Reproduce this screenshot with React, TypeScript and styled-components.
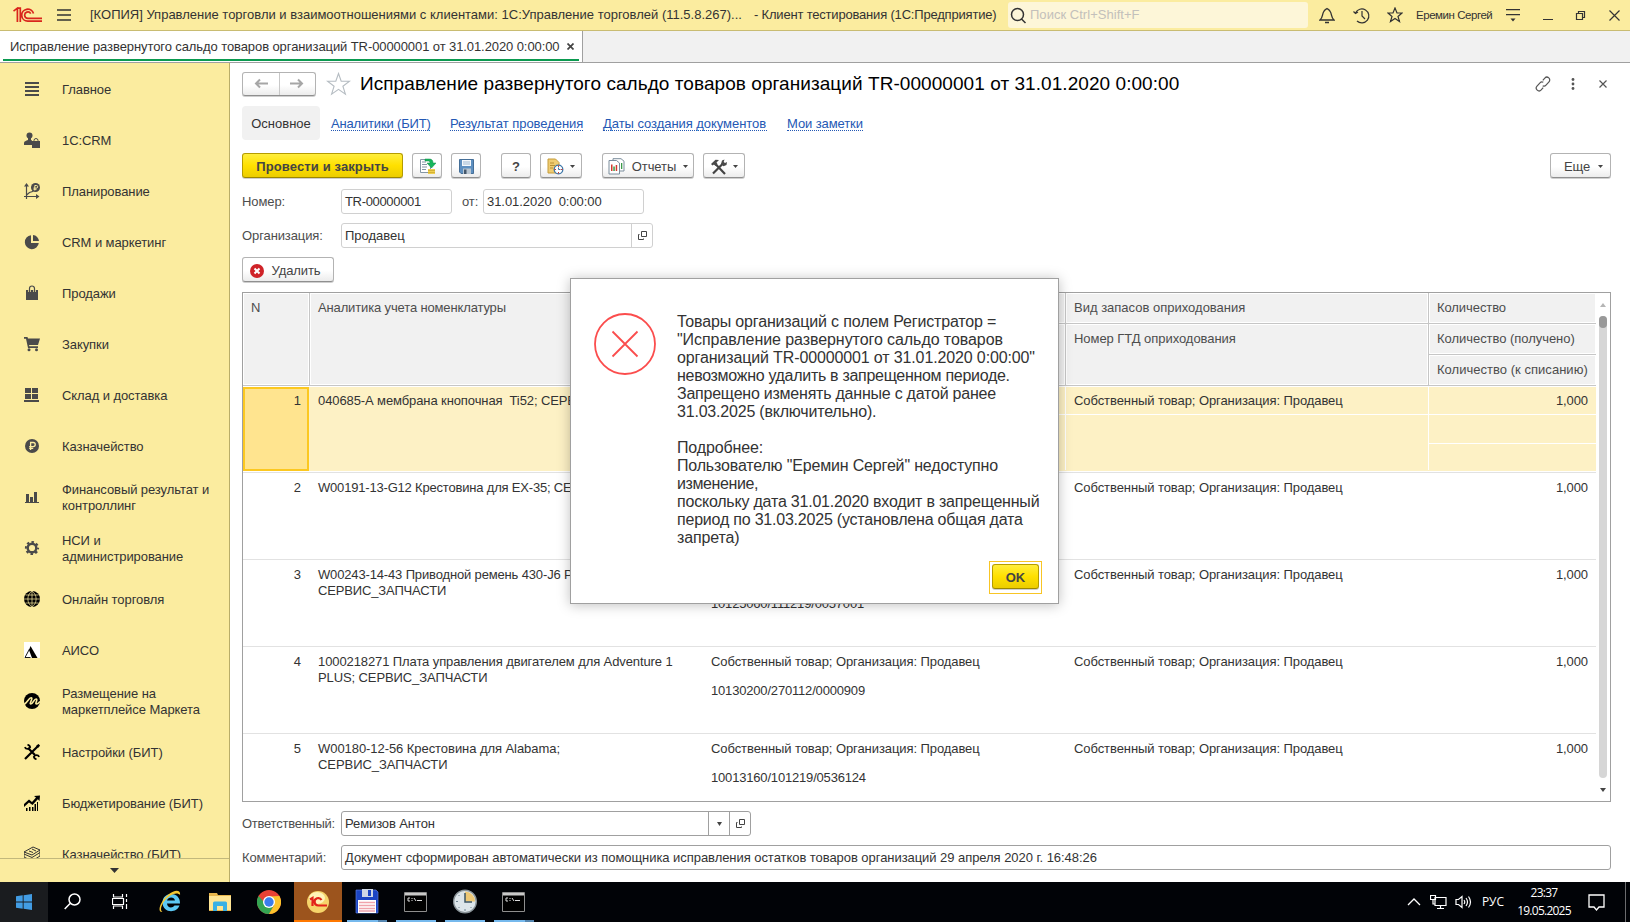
import React from 'react';
import styled, { createGlobalStyle, css } from 'styled-components';

const Global = createGlobalStyle`
  * { box-sizing: border-box; }
  body { margin: 0; background: #fff; font-family: "Liberation Sans", Arial, sans-serif; font-size: 13px; line-height: 16px; color: #333; overflow: hidden; }
  svg { display: block; flex: none; }
`;

const Screen = styled.div`
  width: 1630px; height: 922px; display: flex; flex-direction: column; overflow: hidden; white-space: nowrap;
`;

/* ---------- window title ---------- */
const TitleBar = styled.header`
  height: 31px; flex: none; display: flex; align-items: center; background: #fbec9f; border-bottom: 1px solid #c9bc72; padding-left: 13px;
`;
const WindowTitle = styled.div<{ $width: number; $ls: number }>`
  width: ${p => p.$width}px; flex: none; color: #333; letter-spacing: ${p => p.$ls}px;
`;
const Search = styled.div`
  width: 300px; flex: none; height: 26px; border-radius: 3px; background: #fdf6d8; display: flex; align-items: center; gap: 3px; padding-left: 2px; color: #c3c0bb; margin-right: 2px; letter-spacing: 0.03px;
`;
const TitleIcon = styled.div<{ $w?: number }>`
  width: ${p => p.$w ?? 34}px; flex: none; display: flex; justify-content: center;
`;
const UserName = styled.div`
  width: 77px; flex: none; font-size: 11.5px; margin-left: 4px; letter-spacing: -0.45px;
`;

/* ---------- open tabs ---------- */
const TabStrip = styled.div`
  height: 32px; flex: none; display: flex; background: #f1f1f1; border-bottom: 1px solid #a0a0a0;
`;
const OpenTab = styled.div`
  width: 583px; padding: 0 3px; background: #fff; border-right: 1px solid #a0a0a0;
`;
const OpenTabInner = styled.div`
  height: 30px; border-bottom: 2px solid #0b9a50; padding: 3px 5px 0 7px; display: flex; align-items: center; justify-content: space-between;
  span { letter-spacing: -0.09px; }
`;

/* ---------- navigation ---------- */
const Body = styled.div`
  flex: 1; display: flex; min-height: 0;
`;
const Sidebar = styled.nav`
  width: 230px; flex: none; background: #fbec9f; border-right: 1px solid #b9ad69; display: flex; flex-direction: column;
`;
const SectionList = styled.div`
  height: 795px; padding-top: 1px; overflow: hidden;
`;
const Section = styled.div`
  height: 51px; display: flex; align-items: center; padding: 0 0 1px 24px; gap: 22px; white-space: pre; color: #333; letter-spacing: -0.08px;
  span { padding-top: 2px; }
`;
const SidebarMore = styled.div`
  flex: 1; border-top: 1px solid #c2b87c; display: flex; align-items: center; justify-content: center;
`;

/* ---------- document form ---------- */
const Form = styled.main`
  flex: 1; min-width: 0; padding: 8px 19px 0 12px; display: flex; flex-direction: column;
`;
const FormHeader = styled.div`
  height: 25px; display: flex; align-items: center; margin: 0 -7px 10px 0;
`;
const raised = css`
  border: 1px solid #b3b3b3; border-bottom-color: #8f8f8f; border-radius: 3px; background: linear-gradient(#fff 55%, #ececec); box-shadow: 0 1px 0 #cfcfcf;
`;
const NavButtons = styled.div`
  ${raised} width: 74px; height: 24px; display: flex; margin-right: 10px;
  > div { flex: 1; display: flex; align-items: center; justify-content: center; }
  > div + div { border-left: 1px solid #c8c8c8; }
`;
const FormTitle = styled.h1`
  margin: 0 0 0 9px; flex: 1; font-size: 19px; font-weight: 400; line-height: 24px; color: #000; letter-spacing: 0.06px;
`;
const FormTabs = styled.div`
  height: 34px; display: flex; align-items: center; margin-bottom: 13px; gap: 20px;
`;
const CurrentTab = styled.div`
  width: 78px; height: 34px; line-height: 36px; border-radius: 4px; background: #f1f1f1; text-align: center; margin-right: -9px;
`;
const TabLink = styled.a<{ $width: number; $ls?: number }>`
  width: ${p => p.$width}px; color: #2458b4; line-height: 15px; border-bottom: 1px dotted #2458b4; height: 15px; letter-spacing: ${p => p.$ls ?? -0.05}px;
`;
const Toolbar = styled.div<{ $after: number }>`
  height: 26px; display: flex; align-items: flex-start; margin-bottom: ${p => p.$after}px;
`;
const Button = styled.div<{ $width: number; $left?: number; $gap?: number; $shift?: number }>`
  ${raised} width: ${p => p.$width}px; height: 25px; margin-left: ${p => p.$left ?? 0}px; color: #444; letter-spacing: -0.1px;
  display: flex; align-items: center; justify-content: center; gap: ${p => p.$gap ?? 6}px;
  padding: 2px ${p => Math.max(0, -(p.$shift ?? 0))}px 0 ${p => Math.max(0, p.$shift ?? 0)}px;
`;
const PrimaryButton = styled(Button)`
  border-color: #b59c00; border-bottom-color: #9c8700; background: linear-gradient(#ffee3c, #ffe000 50%, #eccd00); font-weight: 700; color: #444; letter-spacing: 0.12px;
`;
const Spring = styled.div`
  flex: 1;
`;
const Field = styled.div<{ $after: number }>`
  height: 25px; display: flex; align-items: center; margin-bottom: ${p => p.$after}px; color: #4d4d4d;
`;
const Label = styled.div<{ $width?: number; $indent?: number; $ls?: number }>`
  width: ${p => p.$width ?? 99}px; flex: none; padding-left: ${p => p.$indent ?? 0}px; letter-spacing: ${p => p.$ls ?? -0.1}px;
`;
const Input = styled.div<{ $width: number; $strong?: boolean; $ls?: number }>`
  width: ${p => p.$width}px; height: 25px; border: 1px solid ${p => (p.$strong ? '#a0a0a0' : '#d0d0d0')}; border-radius: 3px; display: flex; color: #333; line-height: 23px; white-space: pre;
  letter-spacing: ${p => p.$ls ?? 0}px;
  > span { flex: 1; padding-left: 3px; }
  > div { width: 21px; border-left: 1px solid ${p => (p.$strong ? '#a0a0a0' : '#d0d0d0')}; display: flex; align-items: center; justify-content: center; }
`;

/* ---------- table ---------- */
const Table = styled.div`
  height: 510px; flex: none; border: 1px solid #a0a0a0; margin-bottom: 9px; display: flex; overflow: hidden;
`;
const TableContent = styled.div`
  width: 1353px;
`;
const columns = '67px 393px 363px 363px 167px';
const TableHead = styled.div`
  display: grid; grid-template-columns: ${columns}; height: 93px; color: #4d4d4d;
`;
const Column = styled.div`
  display: flex; flex-direction: column;
`;
const HeadCell = styled.div<{ $span?: number; $last?: boolean; $ls?: number }>`
  height: ${p => (p.$span ?? 1) * 31}px; padding: 7px 8px; background: #f1f1f1; box-shadow: inset 0 0 0 1px #fff; letter-spacing: ${p => p.$ls ?? 0}px;
  border-bottom: 1px solid #c6c6c6; border-right: ${p => (p.$last ? 0 : 1)}px solid #c6c6c6;
`;
const Row = styled.div<{ $selected?: boolean }>`
  display: grid; grid-template-columns: ${columns}; height: 87px; border-bottom: 1px solid #e2e2e2;
  background: ${p => (p.$selected ? '#fdf1c5' : '#fff')}; box-shadow: ${p => (p.$selected ? 'inset 0 1px #fff, inset 0 -1px #fff' : 'none')};
`;
const Cell = styled.div<{ $span?: number; $line?: boolean; $right?: boolean; $end?: boolean; $ls?: number }>`
  height: ${p => (p.$span ?? 1) * 29}px; padding: 7px 8px 0; white-space: pre; overflow: hidden; color: #333;
  text-align: ${p => (p.$right ? 'right' : 'left')}; letter-spacing: ${p => p.$ls ?? -0.08}px;
  border-right: ${p => (p.$end ? 0 : 1)}px solid #fff; border-bottom: ${p => (p.$line ? 1 : 0)}px solid #fff;
`;
const NumberCell = styled.div<{ $selected?: boolean }>`
  margin: 1px 1px 1px 0; padding: ${p => (p.$selected ? '4px 6px' : '6px 8px')}; text-align: right;
  ${p => p.$selected && css`background: #ffe48f; border: 2px solid #fcc820;`}
`;
const ScrollBar = styled.div`
  width: 14px; display: flex; flex-direction: column; align-items: center; padding: 10px 0 9px;
`;
const Track = styled.div`
  width: 8px; flex: 1; margin: 9px 0 10px; background: #d6d6d6; border-radius: 4px;
`;
const Thumb = styled.div`
  height: 12px; border-radius: 4px; background: #999;
`;

/* ---------- message box ---------- */
const Dialog = styled.div`
  position: absolute; left: 570px; top: 278px; width: 489px; height: 326px; background: #fff; border: 1px solid #a0a0a0; box-shadow: 0 1px 12px rgba(0,0,0,.25);
  display: grid; grid-template-columns: 62px 1fr; column-gap: 21px; grid-template-rows: 250px auto; padding: 34px 16px 0 23px;
`;
const Message = styled.div`
  font-size: 16px; line-height: 18px; white-space: pre; color: #333;
`;
const MessageLine = styled.div<{ $ls: number }>`
  height: 18px; letter-spacing: ${p => p.$ls}px;
`;
const FocusFrame = styled.div`
  grid-column: 2; justify-self: end; width: 53px; height: 33px; border: 1px solid #f8c525; padding: 2px; margin-top: -2px;
`;

/* ---------- system task bar ---------- */
const TaskBar = styled.footer`
  height: 40px; flex: none; background: #010307; display: flex; color: #fff; font-family: "Open Sans", "Noto Sans", sans-serif; font-size: 12px;
`;
const Task = styled.div<{ $width?: number; $bg?: string; $line?: string; $tail?: boolean }>`
  width: ${p => p.$width ?? 49}px; height: 40px; display: flex; align-items: center; justify-content: center; padding-bottom: 1px;
  background: ${p => p.$bg ?? 'transparent'};
  ${p => p.$line && css`background-image: linear-gradient(90deg, ${p.$line} ${p.$tail ? '78%' : '100%'}, #5586b0 0); background-size: ${p.$bg ? '100%' : '40px'} 2px; background-position: center bottom; background-repeat: no-repeat;`}
`;
const Tray = styled.div`
  margin-left: auto; display: flex; align-items: center; height: 40px;
`;
const Language = styled.div`
  width: 24px; margin: 0 10px 0 10px; letter-spacing: -0.1px;
`;
const Clock = styled.div`
  width: 56px; text-align: center; line-height: 18px; letter-spacing: -0.75px; margin-right: 16px;
`;
const DesktopEdge = styled.div`
  width: 5px; height: 40px; border-left: 1px solid #6b6c6e; margin-left: 20px;
`;

/* ---------- icons ---------- */
const Svg = ({ w = 16, h = w, children, color = '#4a4a4a' }: { w?: number; h?: number; children: React.ReactNode; color?: string }) => (
  <svg width={w} height={h} viewBox={`0 0 ${w} ${h}`} fill={color} stroke="none">{children}</svg>
);
const Stroke = ({ w = 16, h = w, d, color = '#333', sw = 1.2 }: { w?: number; h?: number; d: string; color?: string; sw?: number }) => (
  <svg width={w} height={h} viewBox={`0 0 ${w} ${h}`} fill="none" stroke={color} strokeWidth={sw}><path d={d} /></svg>
);
const Caret = ({ color = '#444', w = 6, h = 3, up = false }) => (
  <Svg w={w} h={h} color={color}><path d={up ? `M0 ${h}h${w}L${w / 2} 0z` : `M0 0h${w}L${w / 2} ${h}z`} /></Svg>
);
const Logo = () => (
  <svg width="30" height="16" viewBox="0 0 30 16" fill="none" stroke="#d9241c" strokeWidth="1.7">
    <path d="M.5 4.2 4.4 1.2V15M4.2 1.2h3.1V15M20.5 6.5A6 6 0 1 0 14.8 14.2H29M17.7 6.7A3.2 3.2 0 1 0 14.8 11.4H29" />
  </svg>
);
const OpenIcon = () => <Stroke w={11} d="M4.5 1.5h5v5h-5zM2.5 4.500H1.5v5h5V8.5" color="#444" sw={1} />;
const Ruble = ({ color }: { color: string }) => <path d="M6.6 12V4.5h2.6a2 2 0 0 1 0 4.1H5.2M5.2 10.3h4" fill="none" stroke={color} strokeWidth="1.3" />;

const icons = {
  main: <Svg><path d="M1 1h14v2H1zM1 5h14v2H1zM1 9h14v2H1zM1 13h14v2H1z" /></Svg>,
  crm: <Svg><circle cx="5.5" cy="3.5" r="3" /><path d="M4 6h3v2l1 .5V13H0v-2c0-2 2-2 4-3zM8 9h8v7H8z" /><path d="M10 10V8.5a2 2 0 0 1 4 0V10" fill="none" stroke="#4a4a4a" /></Svg>,
  plan: <Svg><path d="M2.5 16V2M0 13.5h14" stroke="#4a4a4a" strokeWidth="1.2" /><path d="M0 3.5 2.5 0 5 3.5zM12 11l3.5 2.5L12 16z" /><path d="m2.5 12 3-2.5 3-1 1.5-1.5" fill="none" stroke="#4a4a4a" strokeWidth="1.2" /><circle cx="11.5" cy="4.5" r="4.5" /><path d="M10.8 7.5V2.5h1.6a1.2 1.2 0 0 1 0 2.6H9.5M9.5 6.3h3" fill="none" stroke="#fbec9f" /></Svg>,
  pie: <Svg><path d="M7 1.2V9h7.8A7 7 0 1 1 7 1.2z" /><path d="M9 1a6.5 6.5 0 0 1 6 6H9z" /></Svg>,
  bag: <Svg><path d="M2 5h12v10H2z" /><path d="M5.5 7V3.5a2.5 2.5 0 0 1 5 0V7" fill="none" stroke="#fbec9f" strokeWidth="2.6" /><path d="M5.5 7V3.5a2.5 2.5 0 0 1 5 0V7" fill="none" stroke="#4a4a4a" strokeWidth="1.2" /></Svg>,
  cart: <Svg><path d="M0 1h3.5l.5 1.5h12L14 9H5l.4 1.3H14V12H4L2 2.7H0z" /><circle cx="5" cy="13.7" r="1.5" /><circle cx="12.5" cy="13.7" r="1.5" /></Svg>,
  store: <Svg><path d="M1 1h6v5H1zM8 1h6v5H8zM1 7h6v5H1zM8 7h6v5H8zM0 13h15v2H0z" /></Svg>,
  cash: <Svg><circle cx="8" cy="8" r="7" /><Ruble color="#fbec9f" /></Svg>,
  bars: <Svg><path d="M1 13h14v1H1zM2 5h3v8H2zM6 8h3v5H6zM10 3h3v10h-3z" /></Svg>,
  gear: <Svg><circle cx="8" cy="8" r="4.3" fill="none" stroke="#4a4a4a" strokeWidth="2.4" /><circle cx="8" cy="8" r="6.1" fill="none" stroke="#4a4a4a" strokeWidth="2" strokeDasharray="2.5 2.29" strokeDashoffset="1.25" /></Svg>,
  globe: <Svg color="#000"><circle cx="8" cy="8" r="8" /><path d="M8 0v16M0 8h16M1.5 4h13M1.5 12h13M8 0C2.5 4 2.5 12 8 16M8 0c5.5 4 5.5 12 0 16" fill="none" stroke="#fbec9f" strokeWidth=".7" /></Svg>,
  aiso: <Svg color="#000"><path d="M0 0h16v16H0z" fill="#fff" /><path d="M6.5 4 13.500 16H8L5 8z" /><path d="M5.5 7 1 15.500h5.500" fill="none" stroke="#000" strokeWidth=".9" /></Svg>,
  market: <Svg color="#000"><circle cx="8" cy="8" r="8" /><path d="M0 11.500C3.500 9.500 5 4.500 7.200 4.800S4.800 11 6.800 11s3.400-5.500 5.400-5S10.500 11 12.500 11s2.500-1.500 3.500-2.500" fill="none" stroke="#fbec9f" strokeWidth="1.600" /></Svg>,
  tools: <Svg color="#000"><path d="M4 4l7 7M14.800 1.200 1 15" stroke="#000" strokeWidth="2.200" /><path d="M14.500 0 16 1.500 14 4l-2-2z" /><path d="M.8 3.200a3 3 0 0 0 5.400 0A3 3 0 0 0 3.500.8M15.200 12.800a3 3 0 0 0-5.400 0 3 3 0 0 0 2.700 2.400" fill="none" stroke="#000" strokeWidth="1.800" /></Svg>,
  growth: <Svg color="#000"><path d="M0 12V9l5-4.500 3 2.500 4-4.500-2-1.500L16 .5 15.500 6l-1.700-1.700L8.500 10 5 7.500z" /><path d="M2 16v-3h1.500v3zM5 16v-4h1.500v4zM8 16v-4h1.500v4zM10.500 16V9H12v7zM13 16V7h1v9z" /></Svg>,
  money: <svg width="16" height="16" viewBox="0 0 16 16" fill="none" stroke="#333"><path d="M0 6 9 1l7 3-8 5zM0 6v5l8 4 8-5V4M0 8l8 3.500 8-5M5 5l4 1.500M8 3l4 2" /></svg>,
};

const sections: [keyof typeof icons, string][] = [
  ['main', 'Главное'], ['crm', '1С:CRM'], ['plan', 'Планирование'], ['pie', 'CRM и маркетинг'], ['bag', 'Продажи'],
  ['cart', 'Закупки'], ['store', 'Склад и доставка'], ['cash', 'Казначейство'], ['bars', 'Финансовый результат и\nконтроллинг'],
  ['gear', 'НСИ и\nадминистрирование'], ['globe', 'Онлайн торговля'], ['aiso', 'АИСО'], ['market', 'Размещение на\nмаркетплейсе Маркета'],
  ['tools', 'Настройки (БИТ)'], ['growth', 'Бюджетирование (БИТ)'], ['money', 'Казначейство (БИТ)'],
];

const stock = 'Собственный товар; Организация: Продавец';
const rows = [
  { item: '040685-А мембрана кнопочная  Ti52; СЕРВИС', kind: '', gtd: '', ls: -0.1 },
  { item: 'W00191-13-G12 Крестовина для EX-35; СЕРВИС', kind: '', gtd: '', ls: -0.19 },
  { item: 'W00243-14-43 Приводной ремень 430-J6 PJ\nСЕРВИС_ЗАПЧАСТИ', kind: '', gtd: '10125060/111219/0057001', ls: -0.15 },
  { item: '1000218271 Плата управления двигателем для Adventure 1\nPLUS; СЕРВИС_ЗАПЧАСТИ', kind: stock, gtd: '10130200/270112/0000909', ls: -0.1 },
  { item: 'W00180-12-56 Крестовина для Alabama;\nСЕРВИС_ЗАПЧАСТИ', kind: stock, gtd: '10013160/101219/0536124', ls: -0.06 },
];

const message: [string, number][] = [
  ['Товары организаций с полем Регистратор =', -0.16],
  ['"Исправление развернутого сальдо товаров', -0.07],
  ['организаций TR-00000001 от 31.01.2020 0:00:00"', -0.13],
  ['невозможно удалить в запрещенном периоде.', -0.3],
  ['Запрещено изменять данные с датой ранее', -0.23],
  ['31.03.2025 (включительно).', -0.2],
  ['', 0],
  ['Подробнее:', -0.15],
  ['Пользователю "Еремин Сергей" недоступно', -0.17],
  ['изменение,', -0.4],
  ['поскольку дата 31.01.2020 входит в запрещенный', -0.21],
  ['период по 31.03.2025 (установлена общая дата', -0.21],
  ['запрета)', -0.15],
];

const documentName = 'Исправление развернутого сальдо товаров организаций TR-00000001 от 31.01.2020 0:00:00';

const PostIcon = () => (
  <Svg w={17}><path d="M1.5 1.5h10v13h-10z" fill="#fff" stroke="#8496a5" /><path d="M3 4h4M3 6.5h5M3 9h5M3 11.5h4" stroke="#8496a5" /><path d="M6 1h4c3 0 4 1.5 4 4h3l-4.5 5L8 5h3c0-1.5-1-2-2-2H6z" fill="#17b65b" stroke="#0c8f48" strokeWidth=".5" /><path d="M9 11h7v5H9z" fill="#efcf50" /><path d="M9 12.5h7M9 14.5h7" stroke="#c9a42a" strokeWidth=".7" /></Svg>
);
const SaveIcon = () => (
  <Svg w={15}><path d="M.5.5h14v14H2l-1.5-1.5z" fill="#5d8fc0" stroke="#456f98" /><path d="M3 1h9v6H3z" fill="#f4f8fc" /><path d="M4 3h7M4 5h7" stroke="#9cb7d0" /><path d="M4 9.5h8V15H4z" fill="#b9c6d2" /><path d="M5 10.5h2.5V15H5z" fill="#44576b" /></Svg>
);
const DocTimeIcon = () => (
  <Svg w={17}><path d="M1 1h7.5L12 4.5V15H1z" fill="#efcc72" stroke="#c59c3b" /><path d="M3 5h4M3 7.5h5M3 10h3" stroke="#b98f34" /><circle cx="11.5" cy="11.5" r="4.3" fill="#fff" stroke="#3e76a8" strokeWidth="1.3" /><path d="M11.5 7.5v1.5M11.5 14v1.5M7.5 11.5H9M14 11.5h1.5" stroke="#c93a35" /><path d="M11.5 9.5v2h2" fill="none" stroke="#3e76a8" /></Svg>
);
const ReportIcon = () => (
  <Svg w={17}><path d="M5 .7h8l3 2.5V13H5z" fill="#fff" stroke="#7a8d9c" /><path d="M1 2.5h7.5L11.5 5v11H1z" fill="#fff" stroke="#7a8d9c" /><path d="M3 6.5h1.5V13H3z" fill="#d33a2e" /><path d="M5.3 8.5h1.5V13H5.3z" fill="#3b9b49" /><path d="M7.7 7h1.5v6H7.7z" fill="#d33a2e" /><path d="M13 5h1.3v6H13z" fill="#3b9b49" /></Svg>
);
const ToolsIcon = () => (
  <Svg w={16}><path d="M4 4.5 14 15M12.5 4 2 14.5" stroke="#444" strokeWidth="2.2" /><path d="M0 5 4.5.7 8 1 5.5 3.5 6.5 5 4.5 7 3 5.5 1.5 6.5zM11 1.5 13.5.5 12.7 3 14 4l2-1-.5 3-3 1.2L10 5z" /></Svg>
);
const DeleteIcon = () => (
  <Svg w={14}><circle cx="7" cy="7" r="7" fill="#cf2328" /><path d="m4.5 4.5 5 5m0-5-5 5" stroke="#fff" strokeWidth="2" /></Svg>
);
const LinkIcon = () => (
  <svg width="16" height="16" viewBox="0 0 16 16" fill="none" stroke="#555" strokeWidth="1.2">
    <path d="m7.8 4.300 2-2.200a2.800 2.800 0 0 1 4.200 3.800L11 9.200a2.600 2.600 0 0 1-3.300.5M8.200 11.700l-2 2.200A2.800 2.800 0 0 1 2 10.100l3-3.300a2.600 2.600 0 0 1 3.300-.5" />
  </svg>
);

const CmdIcon = () => (
  <Svg w={23} h={20}><path d="M.5.5h22v19H.5z" fill="#000" stroke="#8e8e8e" /><path d="M1 1h21v2.5H1z" fill="#c9c9c9" /><path d="M6 6H4v3h2M8 6v1M8 8v1M10 6l2 3M13 8.5h5" fill="none" stroke="#ddd" /></Svg>
);
const TaskIcons = () => (
  <>
    <Task $width={48} $bg="#1a1c1f"><Svg w={16} color="#429ce3"><path d="M0 2.3 6.7 1.3v6.2H0zM7.6 1.2 16 0v7.5H7.6zM0 8.4h6.7v6.3L0 13.7zM7.6 8.4H16V16l-8.4-1.2z" /></Svg></Task>
    <Task $width={48}><Stroke w={17} d="M16 6.5a5.5 5.5 0 1 1-11 0 5.5 5.5 0 1 1 11 0M6.3 10.2.7 16" color="#fff" sw={1.5} /></Task>
    <Task $width={48}><Stroke w={17} d="M1.5 1v3h9V1M1.5 16v-3h9v3M.5 5.5h11v6H.5zM14.5 1v3M14.5 6v3M14.5 11v5" color="#fff" /></Task>
    <Task $width={52}><Svg w={23} h={24}><path d="M21 13.5H8c.3 4.5 5.5 5 7.5 2h5C17.5 24 3.5 23 3.5 12.5 3.5 1 21.5 1 21 13.5zM8 10.5h8c-.5-4-7-4-8 0z" fill="#5cc8f4" /><path d="M3.5 22C-3 23 2 10 10 4c5-4 12-5 11 1-3-4-12 0-17 8-2 4-3 7-.5 9z" fill="#f5c733" /></Svg></Task>
    <Task $width={48}><Svg w={22} h={20}><path d="M0 1h8l1 2h13v16H0z" fill="#e8b64c" /><path d="M0 4h22v14H0z" fill="#ffe594" /><path d="M4 19v-8q0-1.5 1.5-1.5h11q1.5 0 1.5 1.5v8h-4v-5H8v5z" fill="#38b0e5" /></Svg></Task>
    <Task $width={50}><Svg w={24}><circle cx="12" cy="12" r="12" fill="#e94235" /><path d="M1.6 6 A12 12 0 0 0 12 24L17.2 15 12 12H6.8z" fill="#34a552" /><path d="M22.4 6A12 12 0 0 1 12 24l5.2-9L12 6.5z" fill="#fcc32c" /><circle cx="12" cy="12" r="6" fill="#fff" /><circle cx="12" cy="12" r="4.7" fill="#3b7ded" /></Svg></Task>
    <Task $width={48} $bg="#9c541d" $line="#ff7800"><Svg w={22}><circle cx="11" cy="11" r="11" fill="#f6d46a" /><ellipse cx="10" cy="7" rx="8" ry="6" fill="#fff3b8" /><path d="M3 8.5 5.5 7v8M14.5 9a3.7 3.7 0 1 0-3 5.5H20" fill="none" stroke="#e2231a" strokeWidth="2.2" /></Svg></Task>
    <Task $line="#76b9ed" $tail><Svg w={24} h={25}><path d="M1 1h20l2 2v21H1z" fill="#1b45c4" stroke="#5b7be0" strokeWidth=".7" /><path d="M7 0h11v8H7z" fill="#cfd8e6" /><path d="M13 1h3v6h-3z" fill="#1b45c4" /><path d="M3 11h18v13H3z" fill="#fff" /><path d="M4 13.5h16M4 16.5h16M4 19.5h16M4 22h16" stroke="#f0a3ac" strokeWidth="1.3" /></Svg></Task>
    <Task $line="#76b9ed"><CmdIcon /></Task>
    <Task $line="#76b9ed"><Svg w={24} h={25}><circle cx="12" cy="12.5" r="11.3" fill="#dce5ea" stroke="#8a9499" strokeWidth="1.4" /><path d="M12 2.5a10 10 0 0 1 10 10H12z" fill="#edc875" /><path d="M12 4v9h7" fill="none" stroke="#3c5664" strokeWidth="1.5" /><path d="M12 20v2M3 12.5h2M5.5 6l1 1M5.5 19l1-1M18.5 19l-1-1" stroke="#708692" /></Svg></Task>
    <Task $line="#76b9ed" $tail><CmdIcon /></Task>
  </>
);

export default function App() {
  return (
    <Screen>
      <Global />
      <TitleBar>
        <Logo />
        <TitleIcon $w={41}><Stroke w={14} h={12} d="M0 1h14M0 6h14M0 11h14" sw={1.3} /></TitleIcon>
        <TitleIcon $w={6} />
        <WindowTitle $width={664} $ls={0}>[КОПИЯ] Управление торговли и взаимоотношениями с клиентами: 1С:Управление торговлей (11.5.8.267)...</WindowTitle>
        <WindowTitle $width={254} $ls={-0.19}>- Клиент тестирования (1С:Предприятие)</WindowTitle>
        <Search><Stroke w={17} d="M13.5 7.5a6 6 0 1 1-12 0 6 6 0 1 1 12 0M11.5 12l4 4" sw={1.5} />Поиск Ctrl+Shift+F</Search>
        <TitleIcon><Stroke w={16} h={17} d="M1 13c3-3 2-5 3.5-8C5.5 2.5 6 2.5 8 1.5c2 1 2.5 1 3.5 3.5C13 8 12 10 15 13zM6 15.5h4" sw={1.3} /></TitleIcon>
        <TitleIcon><Stroke w={17} d="M2.5 6a7 7 0 1 1 1.5 8M.5 4.5l2 2L5 5M9 4v5l3 3" sw={1.2} /></TitleIcon>
        <TitleIcon><Stroke w={16} d="m8 1 2 5h5l-4 3.5 1.5 5L8 11.5l-4.5 3 1.5-5L1 6h5z" sw={1.2} /></TitleIcon>
        <UserName>Еремин Сергей</UserName>
        <TitleIcon $w={40}><Svg w={14} h={14} color="#333"><path d="M0 1h14v1.2H0zM0 6h14v1.2H0zM4.5 10.5h5L7 13.5z" /></Svg></TitleIcon>
        <TitleIcon $w={29}><Stroke w={10} h={12} d="M0 10.5h10" sw={1} /></TitleIcon>
        <TitleIcon $w={37}><Stroke w={11} d="M1.5 3.5h6v6h-6zM3.5 3.5v-2h6v6h-2" sw={1.2} /></TitleIcon>
        <TitleIcon $w={31}><Stroke w={11} d="m.5.5 10 10m0-10-10 10" /></TitleIcon>
      </TitleBar>
      <TabStrip>
        <OpenTab><OpenTabInner><span>{documentName}</span><Stroke w={7} d="m.5.5 6 6m0-6-6 6" color="#444" sw={1.7} /></OpenTabInner></OpenTab>
      </TabStrip>
      <Body>
        <Sidebar>
          <SectionList>
            {sections.map(([icon, label]) => <Section key={label}>{icons[icon]}<span>{label}</span></Section>)}
          </SectionList>
          <SidebarMore><Caret w={9} h={5} color="#333" /></SidebarMore>
        </Sidebar>
        <Form>
          <FormHeader>
            <NavButtons>
              <div><Stroke w={14} h={11} d="M14 5.5H2M6 1.5l-4 4 4 4" color="#a6a6a6" sw={2} /></div>
              <div><Stroke w={14} h={11} d="M0 5.5h12M8 1.5l4 4-4 4" color="#a6a6a6" sw={2} /></div>
            </NavButtons>
            <Stroke w={25} h={24} d="m12.5 1.5 2.7 7.8h8.3l-6.6 4.9 2.5 8-6.9-4.9-6.9 4.9 2.5-8L1.5 9.3h8.3z" color="#b5bcc2" sw={1.1} />
            <FormTitle>{documentName}</FormTitle>
            <TitleIcon $w={30}><LinkIcon /></TitleIcon>
            <TitleIcon $w={30}><Svg w={4} h={12} color="#555"><circle cx="2" cy="1.5" r="1.4" /><circle cx="2" cy="6" r="1.4" /><circle cx="2" cy="10.5" r="1.4" /></Svg></TitleIcon>
            <TitleIcon $w={30}><Stroke w={8} d="m.5.5 7 7m0-7-7 7" color="#555" /></TitleIcon>
          </FormHeader>
          <FormTabs>
            <CurrentTab>Основное</CurrentTab>
            <TabLink $width={99} $ls={-0.17}>Аналитики (БИТ)</TabLink>
            <TabLink $width={133}>Результат проведения</TabLink>
            <TabLink $width={164}>Даты создания документов</TabLink>
            <TabLink $width={76} $ls={-0.1}>Мои заметки</TabLink>
          </FormTabs>
          <Toolbar $after={10}>
            <PrimaryButton $width={161}>Провести и закрыть</PrimaryButton>
            <Button $width={30} $left={9}><PostIcon /></Button>
            <Button $width={30} $left={9}><SaveIcon /></Button>
            <Button $width={30} $left={20}><b>?</b></Button>
            <Button $width={42} $left={9}><DocTimeIcon /><Caret w={5} /></Button>
            <Button $width={92} $left={20} $gap={7}><ReportIcon />Отчеты<Caret w={5} /></Button>
            <Button $width={42} $left={9}><ToolsIcon /><Caret w={5} /></Button>
            <Spring />
            <Button $width={61} $gap={8} $shift={6}>Еще<Caret w={5} /></Button>
          </Toolbar>
          <Field $after={9}>
            <Label>Номер:</Label><Input $width={111} $ls={-0.33}><span>TR-00000001</span></Input>
            <Label $width={31} $indent={10}>от:</Label><Input $width={161} $ls={-0.05}><span>31.01.2020  0:00:00</span></Input>
          </Field>
          <Field $after={9}>
            <Label>Организация:</Label><Input $width={312}><span>Продавец</span><div><OpenIcon /></div></Input>
          </Field>
          <Toolbar $after={9}><Button $width={92} $gap={8} $shift={-6}><DeleteIcon />Удалить</Button></Toolbar>
          <Table>
            <TableContent>
              <TableHead>
                <HeadCell $span={3}>N</HeadCell>
                <HeadCell $span={3} $ls={-0.14}>Аналитика учета номенклатуры</HeadCell>
                <Column><HeadCell /><HeadCell $span={2} /></Column>
                <Column><HeadCell>Вид запасов оприходования</HeadCell><HeadCell $span={2} $ls={-0.05}>Номер ГТД оприходования</HeadCell></Column>
                <Column><HeadCell $last $ls={-0.08}>Количество</HeadCell><HeadCell $last $ls={-0.04}>Количество (получено)</HeadCell><HeadCell $last $ls={0.03}>Количество (к списанию)</HeadCell></Column>
              </TableHead>
              {rows.map((row, i) => (
                <Row key={row.item} $selected={i === 0}>
                  <NumberCell $selected={i === 0}>{i + 1}</NumberCell>
                  <Cell $span={2.965} $ls={row.ls}>{row.item}</Cell>
                  <Column><Cell $line>{row.kind}</Cell><Cell $span={1.9} $ls={-0.18}>{row.gtd}</Cell></Column>
                  <Column><Cell $line>{stock}</Cell><Cell $span={1.9} /></Column>
                  <Column><Cell $line $right $end $ls={-0.1}>1,000</Cell><Cell $line $end /><Cell $end $span={0.9} /></Column>
                </Row>
              ))}
            </TableContent>
            <ScrollBar><Caret up color="#b5b5b5" h={4} /><Track><Thumb /></Track><Caret h={4} /></ScrollBar>
          </Table>
          <Field $after={9}>
            <Label $ls={-0.25}>Ответственный:</Label>
            <Input $width={410} $strong $ls={-0.1}><span>Ремизов Антон</span><div><Caret w={5} h={4} /></div><div><OpenIcon /></div></Input>
          </Field>
          <Field $after={0}>
            <Label>Комментарий:</Label>
            <Input $width={1270} $strong $ls={-0.053}><span>Документ сформирован автоматически из помощника исправления остатков товаров организаций 29 апреля 2020 г. 16:48:26</span></Input>
          </Field>
        </Form>
      </Body>
      <TaskBar>
        <TaskIcons />
        <Tray>
          <Stroke w={14} h={8} d="m1 7 6-6 6 6" color="#fff" sw={1.3} />
          <TitleIcon $w={34}><Stroke w={17} h={14} d="M5 2.5h11v8H5zM10.5 11v2.5M7 13.5h7M.5.5h5v4h-5zM3 5v4h2" color="#fff" /></TitleIcon>
          <Stroke w={17} h={14} d="M1 4.5h2.5L7 1.5v11L3.5 9.5H1zM9 5q1.5 2 0 4M11 3q3 4 0 8M13.5 1.5q4 5.5 0 11" color="#fff" />
          <Language>РУС</Language>
          <Clock>23:37<br />19.05.2025</Clock>
          <Stroke w={17} h={17} d="M1 1h15v12h-5l-2.5 3L6 13H1z" color="#fff" sw={1.3} />
          <DesktopEdge />
        </Tray>
      </TaskBar>
      <Dialog role="alertdialog">
        <Stroke w={62} d="M61 31a30 30 0 1 1-60 0 30 30 0 1 1 60 0M18.5 18.5l25 25m0-25-25 25" color="#fb4d4d" sw={1.8} />
        <Message>{message.map(([line, ls], i) => <MessageLine key={i} $ls={ls}>{line}</MessageLine>)}</Message>
        <FocusFrame><PrimaryButton $width={47}>OK</PrimaryButton></FocusFrame>
      </Dialog>
    </Screen>
  );
}
